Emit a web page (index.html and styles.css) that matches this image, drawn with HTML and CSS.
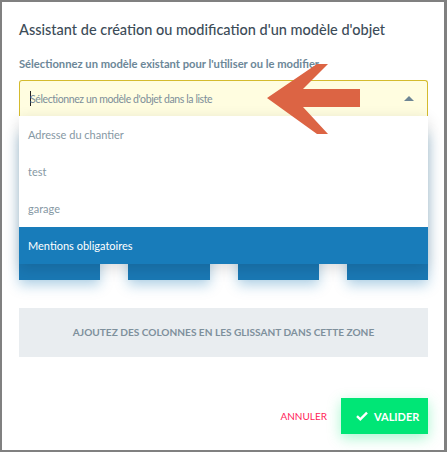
FILE: index.html
```html
<!DOCTYPE html>
<html lang="fr">
<head>
  <meta charset="UTF-8" />
  <meta name="viewport" content="width=device-width, initial-scale=1" />
  <title>Assistant modèle d'objet</title>
  <link rel="stylesheet" href="styles.css">
</head>
<body>

<div class="dialog">
  <h2 class="title">Assistant de création ou modification d'un modèle d'objet</h2>

  <label class="field-label" for="model">Sélectionnez un modèle existant pour l'utiliser ou le modifier</label>

  <div class="picker">
    <div class="select" id="model">
      <span class="caret"></span>
      <span class="placeholder">Sélectionnez un modèle d'objet dans la liste</span>
      <span class="toggle"></span>
    </div>
    <ul class="options">
      <li>Adresse du chantier</li>
      <li>test</li>
      <li>garage</li>
      <li class="active">Mentions obligatoires</li>
    </ul>
  </div>

  <div class="columns">
    <div class="column"></div>
    <div class="column"></div>
    <div class="column"></div>
    <div class="column"></div>
  </div>

  <div class="dropzone">Ajoutez des colonnes en les glissant dans cette zone</div>

  <div class="actions">
    <button class="btn-cancel">Annuler</button>
    <button class="btn-ok">
      <svg width="12" height="10" viewBox="0 0 12 10"><path d="M1 5.2 L4.3 8.3 L11 1.6" fill="none" stroke="#fff" stroke-width="2.4"/></svg>
      Valider
    </button>
  </div>

  <!-- annotation arrow -->
  <svg class="pointer" width="100" height="76" viewBox="0 0 100 76">
    <polygon points="0,34 50,0 61,0 36,25 93,25 93,43 36,43 61,70 50,70" fill="#dc6444"/>
  </svg>
</div>

</body>
</html>
```

FILE: styles.css
```css
body {
  margin: 0;
  font-family: Lato, "Open Sans", sans-serif;
}
.dialog {
  position: relative;
  box-sizing: border-box;
  height: 452px;
  border: 2px solid #808080;
  border-right-width: 3px;
  background: #fff;
  padding: 17px 16px 0 17px;
}
.title {
  margin: 0;
  font-size: 14.5px;
  font-weight: 500;
  line-height: 21px;
  white-space: nowrap;
  color: #3c4c58;
}
.field-label {
  display: block;
  margin-top: 17px;
  font-size: 11.2px;
  font-weight: 700;
  line-height: 14px;
  white-space: nowrap;
  color: #6c8798;
}
.picker {
  position: relative;
  margin-top: 9px;
  z-index: 2;
}
.select {
  display: flex;
  align-items: center;
  box-sizing: border-box;
  height: 36px;
  border: 1px solid #d4bb2e;
  border-bottom: none;
  border-radius: 3px 3px 0 0;
  background: #fffde0;
  padding: 0 10px;
}
.caret {
  width: 1px;
  height: 15px;
  background: #222;
}
.placeholder {
  flex: 1;
  font-size: 10.5px;
  letter-spacing: -0.4px;
  color: #7d8e99;
  margin-left: -1px;
}
.toggle {
  width: 0;
  height: 0;
  border-left: 5px solid transparent;
  border-right: 5px solid transparent;
  border-bottom: 5px solid #6d8594;
  margin-right: 3px;
}
.options {
  position: absolute;
  top: 100%;
  left: 0;
  right: 0;
  margin: 0;
  padding: 0;
  list-style: none;
  background: #fff;
  box-shadow: 0 4px 14px rgba(0, 0, 0, 0.14);
}
.options li {
  height: 37px;
  line-height: 37px;
  padding-left: 9px;
  font-size: 11px;
  color: #8698a4;
}
.options li.active {
  background: #187cba;
  color: #fff;
}
.columns {
  display: grid;
  grid-template-columns: repeat(4, 1fr);
  column-gap: 28px;
  margin-top: 14px;
}
.column {
  height: 150px;
  background: #1a78b4;
  box-shadow: 0 5px 12px rgba(26, 120, 180, 0.35);
}
.dropzone {
  margin-top: 28px;
  height: 49px;
  line-height: 49px;
  background: #e9edf0;
  text-align: center;
  text-transform: uppercase;
  font-size: 10.1px;
  font-weight: 700;
  color: #7e909c;
}
.actions {
  display: flex;
  justify-content: flex-end;
  align-items: center;
  gap: 14px;
  margin-top: 41px;
}
.actions button {
  border: none;
  font-family: inherit;
  text-transform: uppercase;
  cursor: pointer;
}
.btn-cancel {
  background: none;
  color: #ff2459;
  font-size: 10px;
  padding: 0;
}
.btn-ok {
  display: flex;
  align-items: center;
  gap: 6px;
  width: 87px;
  height: 36px;
  padding: 0 0 0 15px;
  background: #00e676;
  color: #fff;
  font-size: 11px;
  font-weight: 700;
  box-shadow: 0 4px 14px rgba(0, 230, 118, 0.35);
}
.pointer {
  position: absolute;
  left: 265px;
  top: 62px;
  z-index: 3;
}
```
